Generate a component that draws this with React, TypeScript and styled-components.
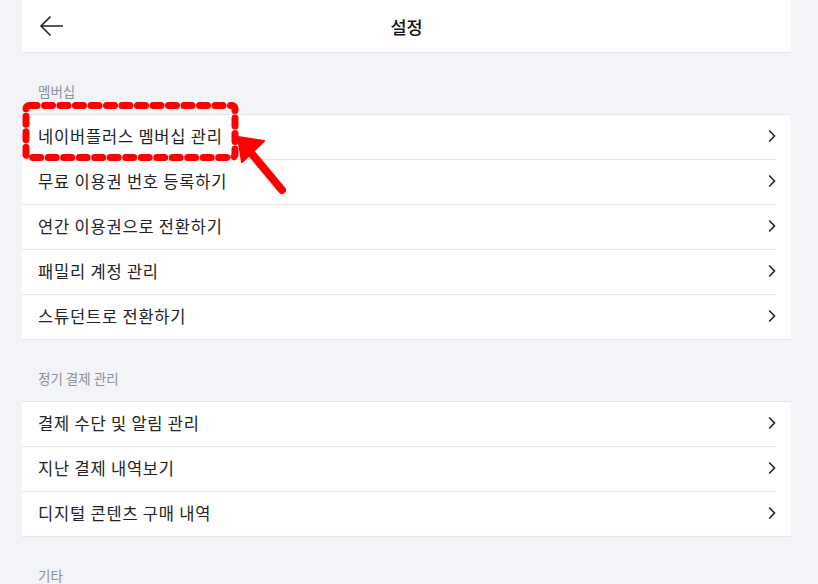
import React from "react";
import styled, { createGlobalStyle } from "styled-components";

const GlobalStyle = createGlobalStyle`
  html, body { margin: 0; padding: 0; background: #f3f4f7; }
  body { font-family: "Noto Sans CJK KR", "Noto Sans", sans-serif; }
  * { box-sizing: border-box; }
`;

const Page = styled.div`
  width: 818px;
  height: 584px;
  overflow: hidden;
  background: #f3f4f7;
  padding: 0 27px 0 22px;
  position: relative;
`;

const Panel = styled.div`
  display: flex;
  flex-direction: column;
`;

const Header = styled.header`
  height: 53px;
  background: #fff;
  border-bottom: 1px solid #e4e6eb;
  display: flex;
  align-items: center;
  justify-content: center;
  position: relative;
`;

const BackButton = styled.button`
  position: absolute;
  left: 16px;
  top: 13px;
  width: 28px;
  height: 26px;
  padding: 0;
  border: 0;
  background: none;
  display: flex;
  align-items: center;
  justify-content: center;
`;

const Title = styled.h1`
  margin: 0;
  font-size: 17.5px;
  font-weight: 500;
  color: #111;
`;

const SectionLabel = styled.div`
  height: 61px;
  display: flex;
  align-items: flex-end;
  padding: 0 0 13px 16px;
  font-size: 13.5px;
  color: #8c9099;
`;

const Group = styled.ul`
  list-style: none;
  margin: 0;
  padding: 0;
  background: #fff;
  border-top: 1px solid #e4e6eb;
  border-bottom: 1px solid #e4e6eb;
`;

const Row = styled.li`
  height: 44px;
  display: flex;
  align-items: center;
  justify-content: space-between;
  padding: 0 15px 2px 16px;
  font-size: 16.5px;
  letter-spacing: 0.8px;
  color: #222;
  position: relative;
  & + & {
    height: 45px;
    padding-top: 1px;
  }
  & + &::before {
    content: "";
    position: absolute;
    left: 0;
    right: 15px;
    top: 0;
    height: 1px;
    background: #e4e6eb;
  }
`;

const Chevron = styled.svg`
  width: 8px;
  height: 14px;
  flex: none;
`;

const Overlay = styled.svg`
  position: absolute;
  left: 0;
  top: 0;
  pointer-events: none;
`;

const sections = [
  {
    label: "멤버십",
    items: [
      "네이버플러스 멤버십 관리",
      "무료 이용권 번호 등록하기",
      "연간 이용권으로 전환하기",
      "패밀리 계정 관리",
      "스튜던트로 전환하기",
    ],
  },
  {
    label: "정기 결제 관리",
    items: ["결제 수단 및 알림 관리", "지난 결제 내역보기", "디지털 콘텐츠 구매 내역"],
  },
  { label: "기타", items: ["공지사항"] },
];

export default function App() {
  return (
    <Page>
      <GlobalStyle />
      <Panel>
        <Header>
          <BackButton aria-label="뒤로">
            <svg width="26" height="22" viewBox="0 0 26 22" fill="none">
              <path d="M24 11H2.5M11.5 1.5L2 11l9.5 9.5" stroke="#222" strokeWidth="1.6" />
            </svg>
          </BackButton>
          <Title>설정</Title>
        </Header>
        {sections.map((s) => (
          <React.Fragment key={s.label}>
            <SectionLabel>{s.label}</SectionLabel>
            <Group>
              {s.items.map((it) => (
                <Row key={it}>
                  <span>{it}</span>
                  <Chevron viewBox="0 0 8 14" fill="none">
                    <path d="M1.2 1.5L6.5 7l-5.3 5.5" stroke="#222" strokeWidth="1.6" />
                  </Chevron>
                </Row>
              ))}
            </Group>
          </React.Fragment>
        ))}
      </Panel>
      <Overlay width="818" height="584" viewBox="0 0 818 584">
        <rect
          x="26"
          y="105.5"
          width="209"
          height="52"
          rx="3"
          fill="none"
          stroke="#ff0000"
          strokeWidth="7"
          strokeLinecap="round"
          strokeDasharray="8 7.5"
        />
        <path d="M282 190L252 154" stroke="#ff0000" strokeWidth="8" strokeLinecap="round" />
        <path d="M238 137L264 141L242 162Z" fill="#ff0000" stroke="#ff0000" strokeWidth="2" strokeLinejoin="round" />
      </Overlay>
    </Page>
  );
}
